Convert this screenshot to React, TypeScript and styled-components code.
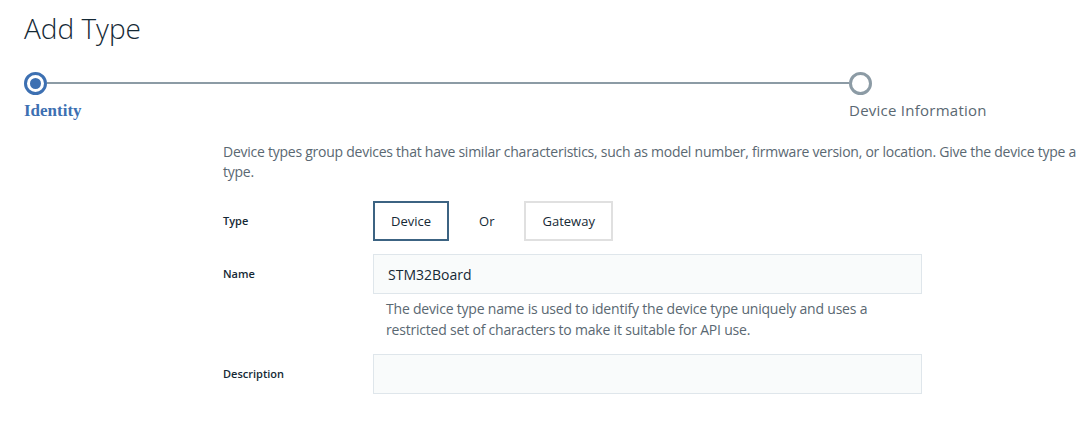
import React from "react";
import styled, { createGlobalStyle } from "styled-components";

const Global = createGlobalStyle`
  html, body { margin: 0; padding: 0; background: #ffffff; }
  body { font-family: "Open Sans", "Noto Sans", sans-serif; overflow: hidden; }
`;

const Page = styled.div`
  padding: 10px 0 0 24px;
  width: 1053px;
  overflow: hidden;
`;

const Title = styled.h1`
  margin: 0;
  font-family: "Open Sans", sans-serif;
  font-weight: 300;
  font-size: 28px;
  line-height: 36px;
  color: #152935;
`;

const Stepper = styled.div`
  display: flex;
  align-items: flex-start;
  width: 848px;
  margin-top: 26px;
`;

const Step = styled.div`
  display: flex;
  flex-direction: column;
  width: 23px;
  flex: none;
`;

const Circle = styled.div<{ $active?: boolean }>`
  box-sizing: border-box;
  width: 23px;
  height: 23px;
  border-radius: 50%;
  border: 3px solid ${(p) => (p.$active ? "#3d70b2" : "#8c9ba5")};
  display: flex;
  align-items: center;
  justify-content: center;
  &::after {
    content: "";
    display: ${(p) => (p.$active ? "block" : "none")};
    width: 11px;
    height: 11px;
    border-radius: 50%;
    background: #3d70b2;
  }
`;

const StepLabel = styled.div<{ $active?: boolean }>`
  white-space: nowrap;
  margin-top: 5px;
  line-height: 20px;
  ${(p) =>
    p.$active
      ? `font-family: "Liberation Serif", serif; font-weight: 700; font-size: 17px; color: #3d70b2; margin-top: 6px;`
      : `font-family: "Open Sans", sans-serif; font-size: 15px; letter-spacing: 0.25px; color: #5a6872;`}
`;

const Connector = styled.div`
  flex: 1;
  height: 2px;
  margin-top: 10px;
  background: #8c9ba5;
`;

const Form = styled.div`
  margin-left: 199px;
  margin-top: 21px;
`;

const Intro = styled.p`
  margin: 0;
  font-size: 14px;
  line-height: 20px;
  color: #5a6872;
  white-space: nowrap;
  letter-spacing: -0.25px;
`;

const Row = styled.div<{ $top: number }>`
  display: grid;
  grid-template-columns: 150px 549px;
  align-items: start;
  margin-top: ${(p) => p.$top}px;
`;

const Label = styled.div`
  font-size: 11px;
  font-weight: 600;
  color: #152935;
  line-height: 40px;
`;

const Choices = styled.div`
  display: flex;
  align-items: center;
`;

const Choice = styled.button<{ $selected?: boolean }>`
  box-sizing: border-box;
  height: 40px;
  padding: 0 16px;
  background: #fff;
  border: 2px solid ${(p) => (p.$selected ? "#3c6382" : "#e0e0e0")};
  font-family: "Open Sans", sans-serif;
  font-size: 13px;
  color: #152935;
  cursor: pointer;
`;

const Or = styled.span`
  font-size: 13px;
  color: #152935;
  margin: 0 30px;
`;

const Field = styled.div`
  display: flex;
  flex-direction: column;
`;

const Input = styled.div`
  box-sizing: border-box;
  height: 40px;
  padding: 0 14px;
  background: #f9fbfb;
  border: 1px solid #dfe6eb;
  display: flex;
  align-items: center;
  font-size: 14px;
  color: #152935;
`;

const Helper = styled.div`
  margin: 4px 0 0 13px;
  font-size: 14px;
  line-height: 21px;
  color: #5a6872;
  letter-spacing: -0.2px;
`;

export default function App() {
  return (
    <>
      <Global />
      <Page>
        <Title>Add Type</Title>
        <Stepper>
          <Step>
            <Circle $active />
            <StepLabel $active>Identity</StepLabel>
          </Step>
          <Connector />
          <Step>
            <Circle />
            <StepLabel>Device Information</StepLabel>
          </Step>
        </Stepper>
        <Form>
          <Intro>
            Device types group devices that have similar characteristics, such as model number, firmware version, or location. Give the device type a
            <br />
            type.
          </Intro>
          <Row $top={19}>
            <Label>Type</Label>
            <Choices>
              <Choice $selected>Device</Choice>
              <Or>Or</Or>
              <Choice>Gateway</Choice>
            </Choices>
          </Row>
          <Row $top={13}>
            <Label>Name</Label>
            <Field>
              <Input>STM32Board</Input>
              <Helper>
                The device type name is used to identify the device type uniquely and uses a
                <br />
                restricted set of characters to make it suitable for API use.
              </Helper>
            </Field>
          </Row>
          <Row $top={14}>
            <Label>Description</Label>
            <Input />
          </Row>
        </Form>
      </Page>
    </>
  );
}
